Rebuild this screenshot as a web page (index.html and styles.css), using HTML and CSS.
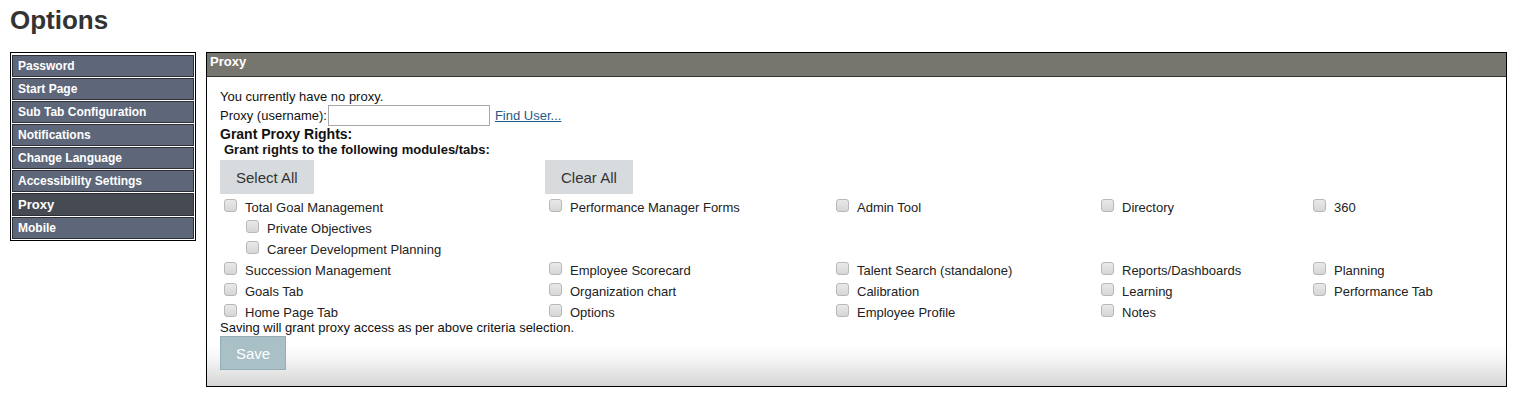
FILE: index.html
```html
<!DOCTYPE html>
<html lang="en">
<head>
    <meta charset="UTF-8">
    <meta name="viewport" content="width=device-width, initial-scale=1.0">
    <title>Options</title>
    <link rel="stylesheet" href="styles.css">
</head>
<body>
    <h1 class="page-title">Options</h1>
    <div class="layout">
        <div class="side-nav">
            <div class="nav-item">Password</div>
            <div class="nav-item">Start Page</div>
            <div class="nav-item">Sub Tab Configuration</div>
            <div class="nav-item">Notifications</div>
            <div class="nav-item">Change Language</div>
            <div class="nav-item">Accessibility Settings</div>
            <div class="nav-item active">Proxy</div>
            <div class="nav-item">Mobile</div>
        </div>
        <div class="panel">
            <div class="panel-head">Proxy</div>
            <div class="panel-body">
                <div class="line">You currently have no proxy.</div>
                <div class="proxy-row">
                    <label for="proxy-user">Proxy (username):</label>
                    <input type="text" id="proxy-user" class="proxy-input">
                    <a href="#" class="find-link">Find User...</a>
                </div>
                <div class="grant-title">Grant Proxy Rights:</div>
                <div class="grant-sub">Grant rights to the following modules/tabs:</div>
                <div class="rights">
                    <div class="cell"><button class="btn">Select All</button></div>
                    <div class="cell"><button class="btn">Clear All</button></div>
                    <div class="cell"></div>
                    <div class="cell"></div>
                    <div class="cell"></div>

                    <div class="cell">
                        <label class="opt"><input type="checkbox" class="chk"><span>Total Goal Management</span></label>
                        <label class="opt sub"><input type="checkbox" class="chk"><span>Private Objectives</span></label>
                        <label class="opt sub"><input type="checkbox" class="chk"><span>Career Development Planning</span></label>
                    </div>
                    <div class="cell"><label class="opt"><input type="checkbox" class="chk"><span>Performance Manager Forms</span></label></div>
                    <div class="cell"><label class="opt"><input type="checkbox" class="chk"><span>Admin Tool</span></label></div>
                    <div class="cell"><label class="opt"><input type="checkbox" class="chk"><span>Directory</span></label></div>
                    <div class="cell"><label class="opt"><input type="checkbox" class="chk"><span>360</span></label></div>

                    <div class="cell"><label class="opt"><input type="checkbox" class="chk"><span>Succession Management</span></label></div>
                    <div class="cell"><label class="opt"><input type="checkbox" class="chk"><span>Employee Scorecard</span></label></div>
                    <div class="cell"><label class="opt"><input type="checkbox" class="chk"><span>Talent Search (standalone)</span></label></div>
                    <div class="cell"><label class="opt"><input type="checkbox" class="chk"><span>Reports/Dashboards</span></label></div>
                    <div class="cell"><label class="opt"><input type="checkbox" class="chk"><span>Planning</span></label></div>

                    <div class="cell"><label class="opt"><input type="checkbox" class="chk"><span>Goals Tab</span></label></div>
                    <div class="cell"><label class="opt"><input type="checkbox" class="chk"><span>Organization chart</span></label></div>
                    <div class="cell"><label class="opt"><input type="checkbox" class="chk"><span>Calibration</span></label></div>
                    <div class="cell"><label class="opt"><input type="checkbox" class="chk"><span>Learning</span></label></div>
                    <div class="cell"><label class="opt"><input type="checkbox" class="chk"><span>Performance Tab</span></label></div>

                    <div class="cell"><label class="opt"><input type="checkbox" class="chk"><span>Home Page Tab</span></label></div>
                    <div class="cell"><label class="opt"><input type="checkbox" class="chk"><span>Options</span></label></div>
                    <div class="cell"><label class="opt"><input type="checkbox" class="chk"><span>Employee Profile</span></label></div>
                    <div class="cell"><label class="opt"><input type="checkbox" class="chk"><span>Notes</span></label></div>
                    <div class="cell"></div>
                </div>
                <div class="save-note">Saving will grant proxy access as per above criteria selection.</div>
                <button class="btn save-btn">Save</button>
            </div>
        </div>
    </div>
</body>
</html>
```

FILE: styles.css
```css
body {
    margin: 0;
    padding: 0 16px 0 10px;
    font-family: "Liberation Sans", Arial, sans-serif;
    font-size: 13px;
    color: #111;
    background: #fff;
}
.page-title {
    margin: 0;
    padding-top: 5px;
    height: 52px;
    box-sizing: border-box;
    font-size: 26px;
    line-height: 30px;
    font-weight: bold;
    color: #333;
}
.layout {
    display: flex;
    align-items: flex-start;
    gap: 10px;
}
.side-nav {
    width: 186px;
    box-sizing: border-box;
    border: 1px solid #000;
    padding: 2px 1px 0 1px;
    background: #fff;
}
.nav-item {
    height: 22px;
    box-sizing: border-box;
    border: 1px solid #2c2f36;
    margin-bottom: 1px;
    background: #5e677a;
    color: #fff;
    font-size: 12px;
    font-weight: bold;
    line-height: 20px;
    padding-left: 5px;
}
.nav-item.active {
    height: 23px;
    background: #464b53;
    font-size: 13px;
    line-height: 21px;
}
.panel {
    flex: 1;
    border: 1px solid #000;
    background: linear-gradient(to bottom, #fff 0, #fff 292px, #f6f6f6 305px, #d5d5d5 100%);
}
.panel-head {
    height: 24px;
    box-sizing: border-box;
    border-bottom: 1px solid #333;
    background: #77766e;
    color: #fff;
    font-weight: bold;
    font-size: 13px;
    line-height: 18px;
    padding-left: 3px;
}
.panel-body {
    padding: 12px 13px 13px 13px;
}
.line {
    line-height: 15px;
}
.proxy-row {
    display: flex;
    align-items: center;
    height: 22px;
}
.proxy-input {
    width: 162px;
    height: 21px;
    box-sizing: border-box;
    margin: 0 5px 0 1px;
    border: 1px solid #a9a9a9;
    padding: 1px 3px;
    font-family: inherit;
}
.find-link {
    color: #1f5b86;
    text-decoration: underline;
}
.grant-title {
    font-size: 14px;
    font-weight: bold;
    line-height: 16px;
}
.grant-sub {
    font-weight: bold;
    line-height: 16px;
    padding-left: 4px;
}
.rights {
    display: grid;
    grid-template-columns: 325px 287px 265px 212px 1fr;
    margin-top: 2px;
}
.btn {
    height: 34px;
    border: none;
    background: #d7dbdd;
    color: #333;
    font-family: inherit;
    font-size: 15px;
    padding: 0 16px;
    margin-bottom: 3px;
}
.opt {
    display: flex;
    align-items: center;
    height: 21px;
    padding-left: 4px;
    color: #222;
}
.opt.sub {
    padding-left: 26px;
}
.chk {
    appearance: none;
    width: 13px;
    height: 13px;
    margin: 0 8px 4px 0;
    border: 1px solid #b8b8b8;
    border-radius: 3px;
    background: linear-gradient(to bottom, #e9e9e9, #d6d6d6);
    box-sizing: border-box;
}
.save-note {
    line-height: 14px;
    margin-top: -2px;
}
.save-btn {
    display: block;
    margin-top: 1px;
    background: #a8c0c6;
    color: #fff;
    border: 1px solid #95aeb5;
    width: 66px;
    padding: 0;
}
```
